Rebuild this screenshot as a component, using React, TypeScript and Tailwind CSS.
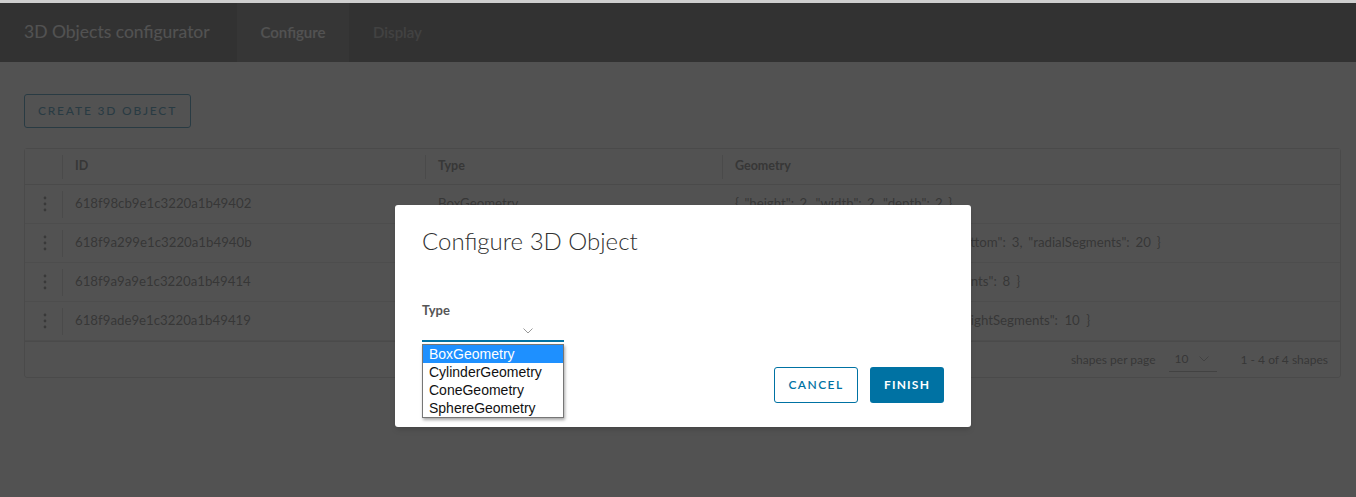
import React from "react";

type Shape = { id: string; type: string; geometry: string; spacing: string };

// spacing classes are kept per row so the JSON lines up like the Metropolis original
const shapes: Shape[] = [
  { id: "618f98cb9e1c3220a1b49402", type: "BoxGeometry", geometry: '{ "height": 2, "width": 2, "depth": 2 }', spacing: "[word-spacing:2px]" },
  { id: "618f9a299e1c3220a1b4940b", type: "CylinderGeometry", geometry: '{ "radiusTop": 3, "height": 10, "radiusBottom": 3, "radialSegments": 20 }', spacing: "[word-spacing:2.5px]" },
  { id: "618f9a9a9e1c3220a1b49414", type: "ConeGeometry", geometry: '{ "radius": 3, "height": 10, "radialSegments": 8 }', spacing: "[word-spacing:2.5px]" },
  { id: "618f9ade9e1c3220a1b49419", type: "SphereGeometry", geometry: '{ "radius": 3, "widthSegments": 10, "heightSegments": 10 }', spacing: "[word-spacing:3.1px]" },
];

const options = ["BoxGeometry", "CylinderGeometry", "ConeGeometry", "SphereGeometry"];

// vertical ellipsis used for the row action menu
const Dots = () => (
  <svg width="4" height="16" viewBox="0 0 4 16" fill="currentColor">
    <circle cx="2" cy="2" r="1.4" />
    <circle cx="2" cy="8" r="1.4" />
    <circle cx="2" cy="14" r="1.4" />
  </svg>
);

const Chevron = ({ className }: { className?: string }) => (
  <svg className={className} width="10" height="6" viewBox="0 0 10 6" fill="none" stroke="currentColor" strokeWidth="1">
    <path d="M0.5 0.5 L5 5 L9.5 0.5" />
  </svg>
);

const App = () => {
  return (
    <div className="relative h-[497px] w-[1356px] overflow-hidden bg-white font-['Lato',sans-serif] text-[#565656]">
      <div className="h-[3px] bg-[#cfcfcf]" />

      {/* header */}
      <header className="flex h-[59px] bg-[#3c3c3c] text-white">
        <div className="flex w-[237px] items-center pl-6 text-[17.5px]">3D Objects configurator</div>
        <div className="flex w-[112px] items-center justify-center bg-[#555555] text-[15px] font-semibold">Configure</div>
        <div className="flex w-[97px] items-center justify-center text-[15px] font-semibold text-[#9a9a9a]">Display</div>
      </header>

      {/* content */}
      <main className="px-6 pt-8">
        <button className="flex h-[34px] w-[167px] items-center justify-center rounded-[3px] border border-[#0072a3] text-[12px] font-medium tracking-[0.15em] text-[#0072a3]">
          CREATE 3D OBJECT
        </button>

        <div className="mt-5 w-[1317px] rounded-[3px] border border-[#cccccc] text-[13.25px]">
          <div className="flex h-[36px] items-center border-b border-[#cccccc] bg-[#fafafa] text-[12.5px] font-bold">
            <div className="h-full w-[37px]" />
            <div className="flex h-6 w-[363px] items-center border-l border-[#cccccc] pl-3">ID</div>
            <div className="flex h-6 w-[297px] items-center border-l border-[#cccccc] pl-3">Type</div>
            <div className="flex h-6 flex-1 items-center border-l border-[#cccccc] pl-3">Geometry</div>
          </div>
          {shapes.map((s) => (
            <div key={s.id} className="flex h-[39px] items-center border-b border-[#dddddd]">
              <div className="flex w-[37px] justify-center pl-[2px] text-[#666]">
                <Dots />
              </div>
              <div className="flex h-[27px] w-[363px] items-center border-l border-[#cccccc] pl-3">{s.id}</div>
              <div className="w-[297px] pl-[13px]">{s.type}</div>
              <div className={`flex-1 whitespace-nowrap pl-[13px] ${s.spacing}`}>{s.geometry}</div>
            </div>
          ))}
          <div className="flex h-[36px] items-center justify-end border-t border-[#cccccc] pr-3 text-[12px]">
            <span>shapes per page</span>
            <div className="ml-[13px] flex h-[24px] w-[48px] items-center justify-between border-b border-[#999] pl-[6px] pr-[8px]">
              <span>10</span>
              <Chevron className="text-[#999]" />
            </div>
            <span className="ml-6">1 - 4 of 4 shapes</span>
          </div>
        </div>
      </main>

      {/* modal backdrop */}
      <div className="absolute inset-x-0 bottom-0 top-[3px] bg-[#313131]/[0.84]" />

      {/* modal */}
      <div className="absolute left-[395px] top-[205px] flex h-[222px] w-[576px] flex-col rounded-[3px] bg-white px-[27px] pb-6 pt-[18px] shadow-md">
        <h3 className="text-[24px] font-light leading-[36px] text-[#313131]">Configure 3D Object</h3>
        <div className="mt-[42px] text-[13px] font-bold leading-[18px] text-[#565656]">Type</div>
        <div className="relative mt-[2px] w-[142px]">
          <div className="flex h-[21px] items-center justify-end border-b-2 border-[#0072a3] pr-[31px] text-[#999]">
            <Chevron />
          </div>
          <ul className="absolute left-0 top-[23px] z-10 w-[142px] border border-[#767676] bg-white font-['Liberation_Sans',sans-serif] text-[14px] leading-[18px] text-[#111] shadow-[1px_2px_3px_rgba(0,0,0,0.35)]">
            {options.map((o, i) => (
              <li key={o} className={i === 0 ? "bg-[#1e90ff] px-[6px] text-white" : "px-[6px]"}>
                {o}
              </li>
            ))}
          </ul>
        </div>
        <div className="mt-auto flex justify-end gap-3">
          <button className="h-[36px] w-[84px] rounded-[3px] border border-[#0072a3] text-[12px] font-semibold tracking-[0.12em] text-[#0072a3]">
            CANCEL
          </button>
          <button className="h-[36px] w-[74px] rounded-[3px] bg-[#0072a3] text-[12px] font-bold tracking-[0.1em] text-white">
            FINISH
          </button>
        </div>
      </div>
    </div>
  );
};

export default App;
